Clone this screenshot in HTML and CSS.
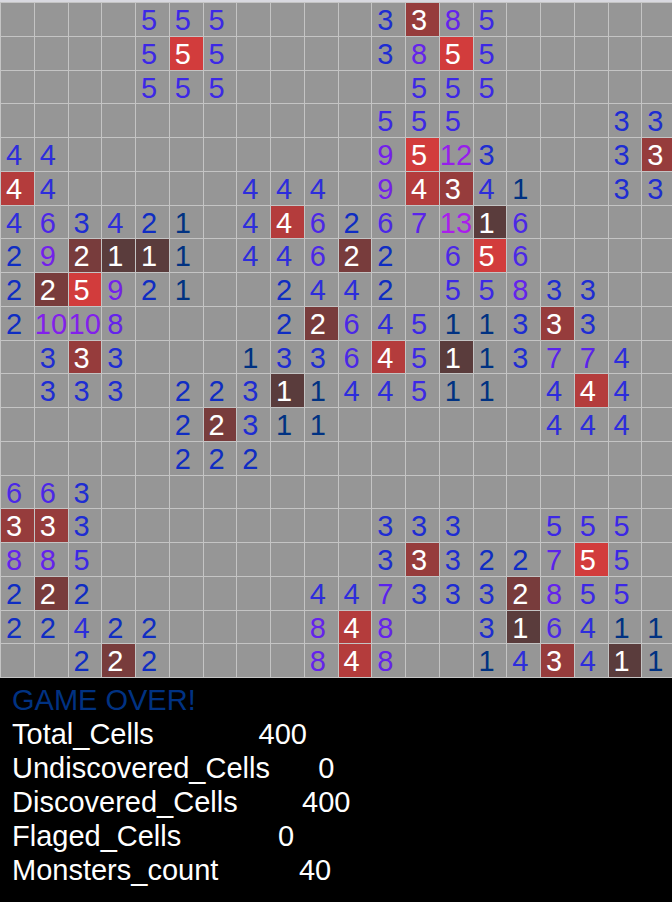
FILE: index.html
```html
<!DOCTYPE html>
<html lang="en">
<head>
<meta charset="utf-8">
<meta name="viewport" content="width=device-width, initial-scale=1">
<title>Monsters</title>
<link rel="stylesheet" href="styles.css">
</head>
<body>
<main class="game">
  <div class="board" id="board"></div>
  <section class="status">
    <p class="status-line game-over">GAME OVER!</p>
    <p class="status-line">Total_Cells             400</p>
    <p class="status-line">Undiscovered_Cells      0</p>
    <p class="status-line">Discovered_Cells        400</p>
    <p class="status-line">Flaged_Cells            0</p>
    <p class="status-line">Monsters_count          40</p>
  </section>
</main>
<script src="board.js"></script>
</body>
</html>
```
FILE: styles.css
```css
body {
  margin: 0;
  background: #000;
  color: #fff;
  font-family: "Liberation Sans", Arial, sans-serif;
  font-size: 29px;
  overflow: hidden;
}

.board {
  display: grid;
  grid-template-columns: repeat(20, 1fr);
  grid-template-rows: repeat(20, 1fr);
  width: calc(100% + 3px);
  aspect-ratio: 1;
  border-top: 2px solid #d9d9e0;
  border-bottom: 1px solid #c4c4c4;
}

.cell {
  box-sizing: border-box;
  min-width: 0;
  min-height: 0;
  padding-left: 5px;
  border-top: 1px solid #c4c4c4;
  border-left: 1px solid #c4c4c4;
  background: #969696;
  line-height: 34px;
  white-space: nowrap;
}

.cell.wide { padding-left: 0; }

.n1 { color: #003282; }
.n2 { color: #0f2dc3; }
.n3 { color: #1e2dd2; }
.n4 { color: #2d2ddc; }
.n5 { color: #3c28e6; }
.n6 { color: #4b28e6; }
.n7 { color: #5a23eb; }
.n8 { color: #6423eb; }
.n9 { color: #7320eb; }
.n10 { color: #8220eb; }
.n12 { color: #961eeb; }
.n13 { color: #aa1eeb; }

.monster { color: #fff; }
.monster.n1 { background: #5a3c3c; }
.monster.n2 { background: #783c3c; }
.monster.n3 { background: #963c3c; }
.monster.n4 { background: #b43c3c; }
.monster.n5 { background: #d23c3c; }

.status { padding: 5px 12px; }

.status-line {
  margin: 0;
  line-height: 34px;
  white-space: pre;
}

.game-over { color: #003282; }
```
FILE: board.js
```js
// One string per row: "." is an empty cell, "*" marks a monster of that level.
const rows = [
  ". . . . 5 5 5 . . . . 3 *3 8 5 . . . . .",
  ". . . . 5 *5 5 . . . . 3 8 *5 5 . . . . .",
  ". . . . 5 5 5 . . . . . 5 5 5 . . . . .",
  ". . . . . . . . . . . 5 5 5 . . . . 3 3",
  "4 4 . . . . . . . . . 9 *5 12 3 . . . 3 *3",
  "*4 4 . . . . . 4 4 4 . 9 *4 *3 4 1 . . 3 3",
  "4 6 3 4 2 1 . 4 *4 6 2 6 7 13 *1 6 . . . .",
  "2 9 *2 *1 *1 1 . 4 4 6 *2 2 . 6 *5 6 . . . .",
  "2 *2 *5 9 2 1 . . 2 4 4 2 . 5 5 8 3 3 . .",
  "2 10 10 8 . . . . 2 *2 6 4 5 1 1 3 *3 3 . .",
  ". 3 *3 3 . . . 1 3 3 6 *4 5 *1 1 3 7 7 4 .",
  ". 3 3 3 . 2 2 3 *1 1 4 4 5 1 1 . 4 *4 4 .",
  ". . . . . 2 *2 3 1 1 . . . . . . 4 4 4 .",
  ". . . . . 2 2 2 . . . . . . . . . . . .",
  "6 6 3 . . . . . . . . . . . . . . . . .",
  "*3 *3 3 . . . . . . . . 3 3 3 . . 5 5 5 .",
  "8 8 5 . . . . . . . . 3 *3 3 2 2 7 *5 5 .",
  "2 *2 2 . . . . . . 4 4 7 3 3 3 *2 8 5 5 .",
  "2 2 4 2 2 . . . . 8 *4 8 . . 3 *1 6 4 1 1",
  ". . 2 *2 2 . . . . 8 *4 8 . . 1 4 *3 4 *1 1",
];

const board = document.getElementById("board");

for (const row of rows) {
  for (const token of row.split(" ")) {
    const cell = document.createElement("div");
    cell.className = "cell";
    if (token !== ".") {
      const value = token.replace("*", "");
      cell.textContent = value;
      cell.classList.add("n" + value);
      if (token.startsWith("*")) cell.classList.add("monster");
      if (value.length > 1) cell.classList.add("wide");
    }
    board.append(cell);
  }
}
```
